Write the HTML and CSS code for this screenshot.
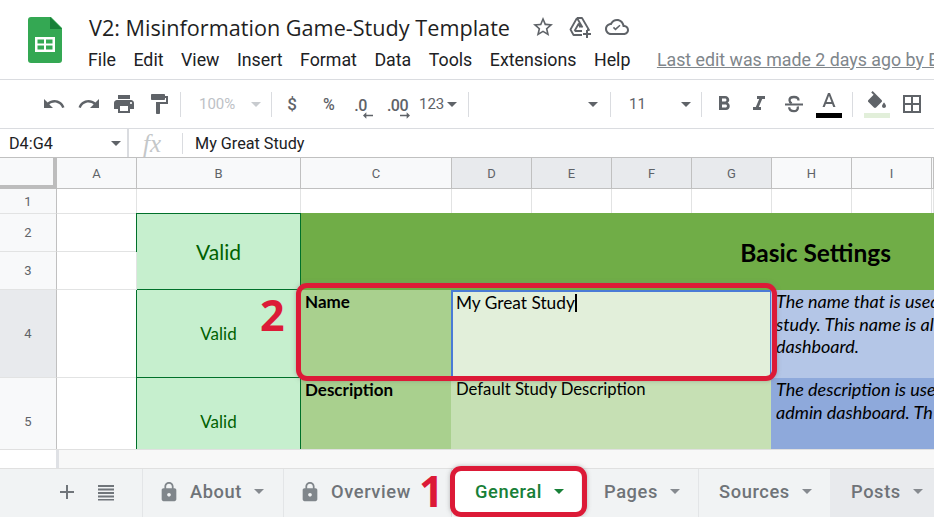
FILE: index.html
```html
<!DOCTYPE html>
<html lang="en">
<head>
  <meta charset="UTF-8" />
  <title>V2: Misinformation Game-Study Template</title>
  <link rel="stylesheet" href="styles.css">
</head>
<body>
  <header class="header">
    <svg class="logo" width="34" height="46" viewBox="0 0 34 46">
      <path fill="#34a853" d="M3 0h20l11 11v32a3 3 0 0 1-3 3H3a3 3 0 0 1-3-3V3a3 3 0 0 1 3-3z"/>
      <path fill="#188038" d="M22 0l12 12H22z"/>
      <path fill="#fff" d="M7 20h20v15H7z"/>
      <path fill="#34a853" d="M9.500 22.500h6.500v4h-6.500zM18 22.500h6.500v4H18zM9.500 28.500h6.500v4h-6.500zM18 28.500h6.500v4H18z"/>
    </svg>
    <div class="header-main">
      <div class="title-row">
        <span class="doc-title">V2: Misinformation Game-Study Template</span>
        <svg class="title-icon" width="24" height="24" viewBox="0 0 24 24"><path d="M22 9.240l-7.190-.62L12 2 9.190 8.630 2 9.240l5.460 4.730L5.820 21 12 17.270 18.180 21l-1.630-7.030L22 9.240zM12 15.400l-3.760 2.270 1-4.280-3.320-2.880 4.380-.38L12 6.100l1.710 4.040 4.380.38-3.320 2.880 1 4.280L12 15.400z"/></svg>
        <svg class="title-icon" width="24" height="24" viewBox="0 0 24 24"><path fill="none" stroke="#5f6368" stroke-width="1.800" stroke-linejoin="round" d="M9 3h5l7 12-2 0M9 3L2.500 14.500 5.500 20H14M9 3l5.500 9.500M6.500 16l4-7 2 3.500M6.500 16H14"/><path d="M18 15h2v3h3v2h-3v3h-2v-3h-3v-2h3z"/></svg>
        <svg class="title-icon" width="24" height="24" viewBox="0 0 24 24"><path d="M19.350 10.040C18.670 6.590 15.640 4 12 4 9.110 4 6.600 5.640 5.350 8.040 2.340 8.360 0 10.910 0 14c0 3.310 2.690 6 6 6h13c2.760 0 5-2.240 5-5 0-2.640-2.050-4.780-4.650-4.960zM19 18H6c-2.210 0-4-1.790-4-4 0-2.050 1.530-3.760 3.560-3.970l1.070-.11.500-.95C8.080 7.140 9.940 6 12 6c2.620 0 4.880 1.860 5.390 4.430l.3 1.500 1.530.11c1.560.1 2.780 1.410 2.780 2.960 0 1.650-1.350 3-3 3z"/><path d="M10.500 15.500l-2.600-2.600 1.100-1.100 1.500 1.500 4-3.600 1 1.100z"/></svg>
      </div>
      <nav class="menu-row">
        <span>File</span><span>Edit</span><span>View</span><span>Insert</span><span>Format</span><span>Data</span><span>Tools</span><span>Extensions</span><span>Help</span>
        <a class="last-edit">Last edit was made 2 days ago by E</a>
      </nav>
    </div>
  </header>

  <div class="toolbar">
    <span class="tool"><svg width="24" height="24" viewBox="0 0 24 24"><path d="M12.500 8c-2.650 0-5.050.99-6.900 2.600L2 7v9h9l-3.620-3.620c1.390-1.160 3.160-1.880 5.120-1.880 3.540 0 6.550 2.310 7.600 5.500l2.370-.78C21.080 11.030 17.150 8 12.500 8z"/></svg></span>
    <span class="tool"><svg width="24" height="24" viewBox="0 0 24 24"><path d="M18.400 10.600C16.550 8.990 14.150 8 11.500 8c-4.650 0-8.580 3.030-9.960 7.220L3.900 16c1.050-3.190 4.050-5.500 7.600-5.500 1.950 0 3.730.72 5.120 1.880L13 16h9V7l-3.600 3.600z"/></svg></span>
    <span class="tool"><svg width="24" height="24" viewBox="0 0 24 24"><path d="M19 8H5c-1.660 0-3 1.340-3 3v6h4v4h12v-4h4v-6c0-1.660-1.340-3-3-3zm-3 11H8v-5h8v5zm3-7c-.55 0-1-.45-1-1s.45-1 1-1 1 .45 1 1-.45 1-1 1zm-1-9H6v4h12V3z"/></svg></span>
    <span class="tool"><svg width="24" height="24" viewBox="0 0 24 24"><path d="M18 4V3c0-.55-.45-1-1-1H5c-.55 0-1 .45-1 1v4c0 .55.45 1 1 1h12c.55 0 1-.45 1-1V6h1v4H9v11c0 .55.45 1 1 1h2c.55 0 1-.45 1-1v-9h8V4h-3z"/></svg></span>
    <span class="sep sep-a"></span>
    <span class="zoom-box"><span>100%</span><i class="caret caret-light"></i></span>
    <span class="sep"></span>
    <span class="tool tool-text tool-dollar">$</span>
    <span class="tool tool-text tool-small">%</span>
    <span class="tool tool-dec">.0<svg width="12" height="8" viewBox="0 0 12 8"><path d="M4 0v3h8v2H4v3L0 4z"/></svg></span>
    <span class="tool tool-dec">.00<svg width="12" height="8" viewBox="0 0 12 8"><path d="M8 0v3H0v2h8v3l4-4z"/></svg></span>
    <span class="format-123">123<i class="caret"></i></span>
    <span class="sep"></span>
    <span class="font-box"><i class="caret"></i></span>
    <span class="sep"></span>
    <span class="size-box"><span>11</span><i class="caret"></i></span>
    <span class="sep"></span>
    <span class="tool tool-bold"><svg width="24" height="24" viewBox="0 0 24 24"><path d="M15.600 10.790c.97-.67 1.650-1.770 1.650-2.790 0-2.260-1.750-4-4-4H7v14h7.040c2.090 0 3.710-1.700 3.710-3.790 0-1.520-.86-2.820-2.150-3.420zM10 6.500h3c.83 0 1.500.67 1.500 1.500s-.67 1.500-1.500 1.500h-3v-3zm3.500 9H10v-3h3.500c.83 0 1.500.67 1.500 1.500s-.67 1.500-1.500 1.500z"/></svg></span>
    <span class="tool"><svg width="24" height="24" viewBox="0 0 24 24"><path d="M10 4v3h2.210l-3.420 8H6v3h8v-3h-2.210l3.420-8H18V4z"/></svg></span>
    <span class="tool"><svg width="24" height="24" viewBox="0 0 24 24"><path d="M3 11.500h18v2H3z"/><path fill="none" stroke="#5f6368" stroke-width="2.300" d="M16.500 8.500c0-2.200-2-3.500-4.500-3.500s-4.500 1.200-4.500 3.200c0 1.400.8 2.400 2.200 3.100M15.800 14.500c.5 2.800-1.300 4.700-3.800 4.700-2.800 0-4.800-1.400-4.800-3.900"/></svg></span>
    <span class="tool tool-color"><svg width="24" height="20" viewBox="0 0 24 20"><path d="M11 2L5.500 16h2.250l1.120-3h6.250l1.120 3h2.250L13 2h-2zm-1.380 9L12 4.670 14.380 11H9.620z"/></svg><i class="swatch swatch-black"></i></span>
    <span class="sep sep-b"></span>
    <span class="tool tool-color"><svg width="24" height="20" viewBox="0 0 24 20"><path d="M16.560 8.940L7.620 0 6.210 1.410l2.380 2.380-5.150 5.150c-.59.59-.59 1.540 0 2.120l5.500 5.500c.29.29.68.44 1.060.44s.77-.15 1.060-.44l5.500-5.500c.59-.58.59-1.530 0-2.120zM19 11.500s-2 2.170-2 3.500c0 1.100.9 2 2 2s2-.9 2-2c0-1.330-2-3.500-2-3.500z"/></svg><i class="swatch swatch-fill"></i></span>
    <span class="tool"><svg width="24" height="24" viewBox="0 0 24 24"><path d="M3 3v18h18V3H3zm8 16H5v-6h6v6zm0-8H5V5h6v6zm8 8h-6v-6h6v6zm0-8h-6V5h6v6z"/></svg></span>
  </div>

  <div class="formula-bar">
    <div class="name-box"><span>D4:G4</span><i class="caret"></i></div>
    <div class="fx">fx</div>
    <div class="formula-text">My Great Study</div>
  </div>

  <div class="sheet">
    <div class="corner"></div>
    <div class="col-head">A</div>
    <div class="col-head">B</div>
    <div class="col-head">C</div>
    <div class="col-head col-sel">D</div>
    <div class="col-head col-sel">E</div>
    <div class="col-head col-sel">F</div>
    <div class="col-head col-sel">G</div>
    <div class="col-head">H</div>
    <div class="col-head">I</div>
    <div class="col-head"></div>

    <div class="row-head">1</div>
    <div class="cell"></div><div class="cell"></div><div class="cell"></div><div class="cell"></div><div class="cell"></div><div class="cell"></div><div class="cell"></div><div class="cell"></div><div class="cell"></div><div class="cell"></div>

    <div class="row-head">2</div>
    <div class="cell cell-a"></div>
    <div class="valid valid-big">Valid</div>
    <div class="banner">Basic Settings</div>
    <div class="row-head">3</div>
    <div class="cell cell-a"></div>

    <div class="row-head row-sel">4</div>
    <div class="cell cell-a"></div>
    <div class="valid">Valid</div>
    <div class="label-cell">Name</div>
    <div class="value-active">My Great Study<span class="text-caret"></span></div>
    <div class="help-cell help-light">The name that is used<br>study. This name is al<br>dashboard.</div>

    <div class="row-head">5</div>
    <div class="cell cell-a"></div>
    <div class="valid">Valid</div>
    <div class="label-cell">Description</div>
    <div class="value-cell">Default Study Description</div>
    <div class="help-cell help-dark">The description is use<br>admin dashboard. Th</div>
  </div>

  <div class="scroll-strip"><div class="scroll-left"></div></div>

  <div class="tabs">
    <div class="tab-tools">
      <svg width="24" height="24" viewBox="0 0 24 24"><path d="M19 13h-6v6h-2v-6H5v-2h6V5h2v6h6z"/></svg>
      <svg width="24" height="24" viewBox="0 0 24 24"><path d="M4 5h16v2H4zM4 8.500h16v2H4zM4 12h16v2H4zM4 15.500h16v2H4zM4 19h16v1.500H4z"/></svg>
    </div>
    <div class="tab tab-about"><svg class="lock" width="22" height="22" viewBox="0 0 24 24"><path d="M18 8h-1V6c0-2.760-2.240-5-5-5S7 3.240 7 6v2H6c-1.100 0-2 .9-2 2v10c0 1.100.9 2 2 2h12c1.100 0 2-.9 2-2V10c0-1.100-.9-2-2-2zm-6 9c-1.100 0-2-.9-2-2s.9-2 2-2 2 .9 2 2-.9 2-2 2zm3.100-9H8.900V6c0-1.710 1.390-3.100 3.100-3.100 1.710 0 3.100 1.390 3.100 3.100v2z"/></svg>About<i class="caret"></i></div>
    <div class="tab tab-overview"><svg class="lock" width="22" height="22" viewBox="0 0 24 24"><path d="M18 8h-1V6c0-2.760-2.240-5-5-5S7 3.240 7 6v2H6c-1.100 0-2 .9-2 2v10c0 1.100.9 2 2 2h12c1.100 0 2-.9 2-2V10c0-1.100-.9-2-2-2zm-6 9c-1.100 0-2-.9-2-2s.9-2 2-2 2 .9 2 2-.9 2-2 2zm3.100-9H8.900V6c0-1.710 1.390-3.100 3.100-3.100 1.710 0 3.100 1.390 3.100 3.100v2z"/></svg>Overview</div>
    <div class="tab tab-active">General<i class="caret"></i></div>
    <div class="tab tab-pages">Pages<i class="caret"></i></div>
    <div class="tab tab-sources">Sources<i class="caret"></i></div>
    <div class="tab tab-posts">Posts<i class="caret"></i></div>
  </div>

  <!-- annotations drawn over the screenshot -->
  <div class="mark mark-name"></div>
  <div class="mark mark-tab"></div>
  <div class="num num-2">2</div>
  <div class="num num-1">1</div>
</body>
</html>
```

FILE: styles.css
```css
* {
  box-sizing: border-box;
}
html, body {
  margin: 0;
  height: 517px;
  overflow: hidden;
}
body {
  position: relative;
  font-family: Roboto, sans-serif;
  background: white;
  color: #202124;
}
svg {
  fill: #5f6368;
  flex: none;
}

.caret {
  display: inline-block;
  width: 0;
  height: 0;
  border-left: 5px solid transparent;
  border-right: 5px solid transparent;
  border-top: 5px solid #5f6368;
}

/* title area */
.header {
  display: flex;
  height: 80px;
  border-bottom: 1px solid #dadce0;
}
.logo {
  margin: 17px 0 0 28px;
}
.header-main {
  margin-left: 27px;
  white-space: nowrap;
}
.title-row {
  display: flex;
  align-items: center;
  height: 28px;
  margin-top: 13px;
}
.doc-title {
  font-family: "Open Sans", sans-serif;
  font-size: 21.650px;
  color: #1f1f1f;
  width: 442px;
}
.title-icon {
  margin-right: 13px;
}
.menu-row {
  display: flex;
  align-items: center;
  margin-top: 5px;
  font-size: 17.800px;
  height: 26px;
}
.menu-row span {
  margin-left: -1px;
  margin-right: 18.500px;
}
.last-edit {
  margin-left: 8px;
  color: #80868b;
  text-decoration: underline;
}

/* toolbar */
.toolbar {
  display: flex;
  align-items: center;
  height: 49px;
  padding-left: 36px;
  border-bottom: 1px solid #dadce0;
}
.tool {
  display: flex;
  flex-direction: column;
  align-items: center;
  justify-content: center;
  width: 35px;
  height: 30px;
}
.tool svg {
  width: 24px;
}
.tool-text {
  font-size: 17px;
  font-weight: 500;
  color: #5f6368;
}
.tool-dollar {
  padding-left: 5px;
}
.tool-small {
  font-size: 16px;
  padding-left: 9px;
}
.tool-bold {
  margin-left: 4px;
}
.tool-dec {
  width: 37px;
  padding-top: 6px;
  font-size: 16px;
  font-weight: 500;
  color: #5f6368;
  letter-spacing: -0.500px;
}
.tool-dec svg {
  width: 10px;
  height: 7px;
  margin-left: 14px;
  margin-top: -3px;
}
.sep {
  width: 1px;
  height: 25px;
  background: #dadce0;
  flex: none;
}
.sep-a {
  margin-left: 4px;
}
.sep-b {
  margin: 0 6px;
}
.zoom-box {
  display: flex;
  align-items: center;
  width: 90px;
  padding-left: 18px;
  font-size: 15px;
  color: #bdc1c6;
}
.caret-light {
  margin-left: 16px;
  border-top-color: #c8cbcf;
}
.format-123 {
  display: flex;
  align-items: center;
  gap: 3px;
  width: 52px;
  padding-left: 3px;
  font-size: 15px;
  color: #5f6368;
}
.font-box {
  display: flex;
  justify-content: flex-end;
  align-items: center;
  width: 141px;
  padding-right: 12px;
}
.size-box {
  display: flex;
  align-items: center;
  justify-content: space-between;
  width: 90px;
  padding: 0 10px 0 18px;
  font-size: 15px;
  color: #5f6368;
}
.tool-color {
  gap: 0;
}
.tool-color svg {
  height: 20px;
}
.swatch {
  display: block;
  width: 26px;
  height: 5px;
  margin-top: 2px;
}
.swatch-black {
  background: black;
}
.swatch-fill {
  background: #e2efda;
}

/* formula bar */
.formula-bar {
  display: flex;
  align-items: center;
  height: 29px;
  border-bottom: 1px solid #c0c0c0;
  font-size: 16.200px;
}
.name-box {
  display: flex;
  align-items: center;
  justify-content: space-between;
  width: 129px;
  height: 100%;
  padding: 0 6px 0 9px;
  border-right: 2px solid #dadce0;
}
.fx {
  width: 54px;
  height: 21px;
  line-height: 21px;
  padding-left: 14px;
  border-right: 1px solid #dadce0;
  font-family: "Liberation Serif", serif;
  font-style: italic;
  font-size: 25px;
  color: #c4c7c9;
}
.formula-text {
  margin-left: 12px;
}

/* grid */
.sheet {
  display: grid;
  grid-template-columns: 57px 80px 164px 151px repeat(6, 80px) 2px;
  grid-template-rows: 31px 25px 38px 38px 88px 88px;
  width: 934px;
  height: 291px;
  overflow: hidden;
  font-family: Lato, sans-serif;
  font-size: 17px;
}
.corner {
  background: #f8f9fa;
  border-right: 4px solid #bdbdbd;
  border-bottom: 4px solid #bdbdbd;
}
.col-head {
  display: flex;
  align-items: center;
  justify-content: center;
  background: #f8f9fa;
  border-right: 1px solid #c0c0c0;
  border-bottom: 1px solid #c0c0c0;
  font-family: Roboto, sans-serif;
  font-size: 13px;
  color: #5f6368;
}
.row-head {
  grid-column: 1;
  display: flex;
  align-items: center;
  justify-content: center;
  background: #f8f9fa;
  border-right: 1px solid #c0c0c0;
  border-bottom: 1px solid #e2e3e3;
  font-family: Roboto, sans-serif;
  font-size: 13px;
  color: #5f6368;
}
.col-sel, .row-sel {
  background: #e8eaed;
}
.cell {
  border-right: 1px solid #e2e3e3;
  border-bottom: 1px solid #e2e3e3;
}
.cell-a {
  grid-column: 2;
}
.valid {
  grid-column: 3;
  display: flex;
  align-items: center;
  justify-content: center;
  margin-left: -1px;
  background: #c6efce;
  border-left: 1px solid #00702a;
  border-right: 1px solid #00702a;
  border-bottom: 1px solid #00702a;
  color: #006100;
  font-size: 17px;
}
.valid-big {
  grid-row: 3 / span 2;
  margin-top: -1px;
  border-top: 1px solid #00702a;
  font-size: 21px;
}
.banner {
  grid-column: 4 / -1;
  grid-row: 3 / span 2;
  display: flex;
  align-items: center;
  justify-content: flex-end;
  margin-top: -1px;
  padding: 2px 43px 0 0;
  background: #70ad47;
  color: black;
  font-size: 24.500px;
  font-weight: 700;
}
.label-cell {
  padding: 1px 4px;
  background: #a9d08e;
  font-weight: 700;
  color: black;
}
.value-active {
  grid-column: span 4;
  margin: 0 0 0 -1px;
  padding: 0 3px;
  background: #e2efda;
  border: 2px solid #4a7bd6;
  font-size: 17.300px;
  color: black;
}
.text-caret {
  display: inline-block;
  width: 2px;
  height: 18px;
  margin-bottom: -3px;
  background: black;
}
.value-cell {
  grid-column: span 4;
  margin-left: -1px;
  padding: 1px 5px;
  background: #c6e0b4;
  font-size: 16.700px;
  color: black;
}
.help-cell {
  grid-column: span 3;
  margin-left: -1px;
  padding: 0 5px;
  font-size: 18px;
  line-height: 22.500px;
  font-style: italic;
  color: black;
  white-space: nowrap;
  overflow: hidden;
}
.help-light {
  background: #b4c6e7;
}
.help-dark {
  background: #8ea9db;
}

.scroll-strip {
  height: 19px;
  background: #f8f8f8;
  border-top: 1px solid #e0e0e0;
}
.scroll-left {
  width: 59px;
  height: 100%;
  background: white;
  border-right: 3px solid #dfe1e5;
}

/* sheet tabs */
.tabs {
  display: flex;
  height: 49px;
  background: #f1f3f4;
  border-top: 1px solid #e0e0e0;
  font-size: 18.300px;
  font-weight: 500;
  letter-spacing: 0.600px;
  color: #6f7378;
}
.tab-tools {
  display: flex;
  align-items: center;
  gap: 15px;
  width: 143px;
  padding: 0 0 3px 55px;
  border-right: 1px solid #e3e5e7;
}
.tab-tools svg {
  fill: #70757a;
}
.tab {
  display: flex;
  align-items: center;
  padding-bottom: 3px;
  border-right: 1px solid #e3e5e7;
  white-space: nowrap;
}
.tab .caret {
  margin-left: 12px;
  border-top-color: #868a8f;
}
.lock {
  fill: #80868b;
  margin-right: 10px;
}
.tab-about {
  width: 141px;
  padding-left: 15px;
}
.tab-overview {
  width: 168px;
  padding-left: 15px;
}
.tab-active {
  width: 129px;
  padding-left: 23px;
  background: white;
  color: #188038;
  border-right: 0;
}
.tab-active .caret {
  border-top-color: #188038;
}
.tab-pages {
  width: 118px;
  padding-left: 23px;
}
.tab-sources {
  width: 131px;
  padding-left: 20px;
  border-right: 0;
}
.tab-posts {
  flex: 1;
  padding-left: 21px;
  background: #e8eaed;
  border-right: 0;
}

/* annotations */
.mark {
  position: absolute;
  border: 5px solid #dc1a37;
  border-radius: 11px;
  box-shadow: 0 0 4px rgba(120, 120, 120, 0.500);
}
.mark-name {
  left: 296px;
  top: 283px;
  width: 481px;
  height: 98px;
}
.mark-tab {
  left: 450px;
  top: 466px;
  width: 137px;
  height: 51px;
}
.num {
  position: absolute;
  font-family: "Open Sans", sans-serif;
  font-size: 43px;
  line-height: 1;
  font-weight: 700;
  color: #dc1a37;
}
.num-2 {
  left: 260px;
  top: 293px;
}
.num-1 {
  left: 419px;
  top: 469px;
}
```
